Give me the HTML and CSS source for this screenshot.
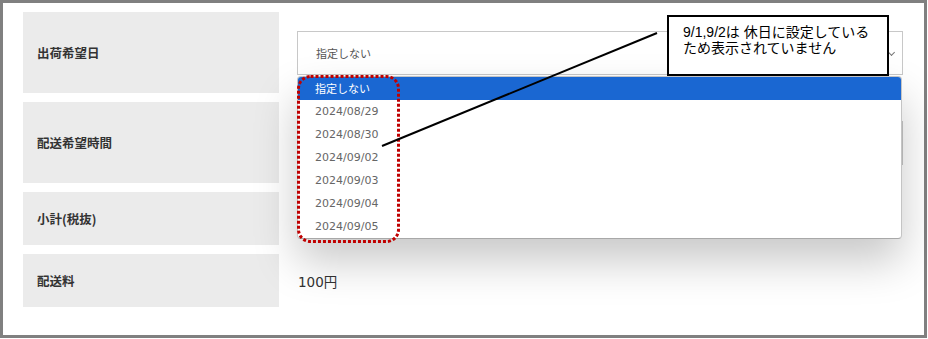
FILE: index.html
```html
<!DOCTYPE html>
<html lang="ja">
<head>
    <meta charset="UTF-8">
    <meta name="viewport" content="width=device-width, initial-scale=1.0">
    <title>配送指定</title>
    <link rel="stylesheet" href="styles.css">
</head>
<body>
    <div class="frame">
        <div class="order-form">
            <div class="row tall">
                <div class="label">出荷希望日</div>
                <div class="value">
                    <div class="select-wrap">
                        <div class="select">指定しない<span class="chevron"></span></div>
                        <ul class="dropdown">
                            <li class="active">指定しない</li>
                            <li>2024/08/29</li>
                            <li>2024/08/30</li>
                            <li>2024/09/02</li>
                            <li>2024/09/03</li>
                            <li>2024/09/04</li>
                            <li>2024/09/05</li>
                        </ul>
                    </div>
                </div>
            </div>

            <div class="row tall">
                <div class="label">配送希望時間</div>
                <div class="value">
                    <div class="select">指定しない<span class="chevron"></span></div>
                </div>
            </div>

            <div class="row">
                <div class="label">小計(税抜)</div>
                <div class="value"></div>
            </div>

            <div class="row">
                <div class="label">配送料</div>
                <div class="value">100円</div>
            </div>
        </div>

        <!-- annotation layer -->
        <svg class="notes" width="928" height="339" viewBox="0 0 928 339">
            <rect x="298.5" y="76.5" width="100" height="165" rx="12" fill="none"
                  stroke="#c00000" stroke-width="3" stroke-dasharray="3 2"/>
            <line x1="382" y1="146" x2="657" y2="33" stroke="#000" stroke-width="2"/>
        </svg>
        <div class="callout">9/1,9/2は 休日に設定している<br>ため表示されていません</div>
    </div>
</body>
</html>
```

FILE: styles.css
```css
body {
    margin: 0;
    background: #fff;
    font-family: "Noto Sans CJK JP", sans-serif;
}

.frame {
    position: relative;
    box-sizing: border-box;
    width: 927px;
    height: 338px;
    border: 3px solid #808080;
    padding: 9px 21px 0 20px;
    background: #fff;
}

.order-form {
    display: grid;
    row-gap: 9px;
}

.row {
    display: grid;
    grid-template-columns: 256px 1fr;
    column-gap: 18px;
    height: 53px;
}

.row.tall {
    height: 81px;
}

.label {
    display: flex;
    align-items: center;
    padding-left: 14px;
    background: #ebebeb;
    color: #333;
    font-size: 12.5px;
    font-weight: bold;
}

.value {
    display: flex;
    align-items: center;
    color: #333;
    font-family: "DejaVu Sans", "Noto Sans CJK JP", sans-serif;
    font-size: 13.5px;
    padding-left: 1px;
}

.select-wrap {
    position: relative;
    width: 100%;
}

.select {
    position: relative;
    box-sizing: border-box;
    display: flex;
    align-items: center;
    width: 606px;
    height: 44px;
    margin-left: -1px;
    padding-left: 18px;
    border: 1px solid #c8c8c8;
    background: #fff;
    color: #555;
    font-family: "Noto Sans CJK JP", sans-serif;
    font-size: 11px;
}

.chevron {
    position: absolute;
    right: 8px;
    top: 18px;
    width: 4px;
    height: 4px;
    border-right: 1px solid #777;
    border-bottom: 1px solid #777;
    transform: rotate(45deg);
}

.dropdown {
    position: absolute;
    left: -1px;
    top: 45px;
    box-sizing: border-box;
    width: 605px;
    margin: 0;
    padding: 0;
    list-style: none;
    background: #fff;
    border: 1px solid #c4c4c4;
    border-bottom-color: #a8a8a8;
    border-radius: 4px;
    overflow: hidden;
    box-shadow: 0 22px 44px rgba(0, 0, 0, 0.22);
    z-index: 2;
}

.dropdown li {
    height: 23px;
    line-height: 23px;
    padding-left: 17px;
    color: #666;
    font-family: "DejaVu Sans", "Noto Sans CJK JP", sans-serif;
    font-size: 11px;
}

.dropdown li.active {
    background: #1a67d2;
    color: #fff;
    font-family: "Noto Sans CJK JP", sans-serif;
}

.notes {
    position: absolute;
    left: -3px;
    top: -3px;
    z-index: 3;
}

.callout {
    position: absolute;
    left: 664px;
    top: 12px;
    box-sizing: border-box;
    width: 222px;
    height: 61px;
    padding: 7px 0 0 14px;
    border: 2px solid #000;
    background: #fff;
    color: #000;
    font-family: "Liberation Sans", "Noto Sans CJK JP", sans-serif;
    font-size: 14px;
    line-height: 16px;
    z-index: 4;
}
```
